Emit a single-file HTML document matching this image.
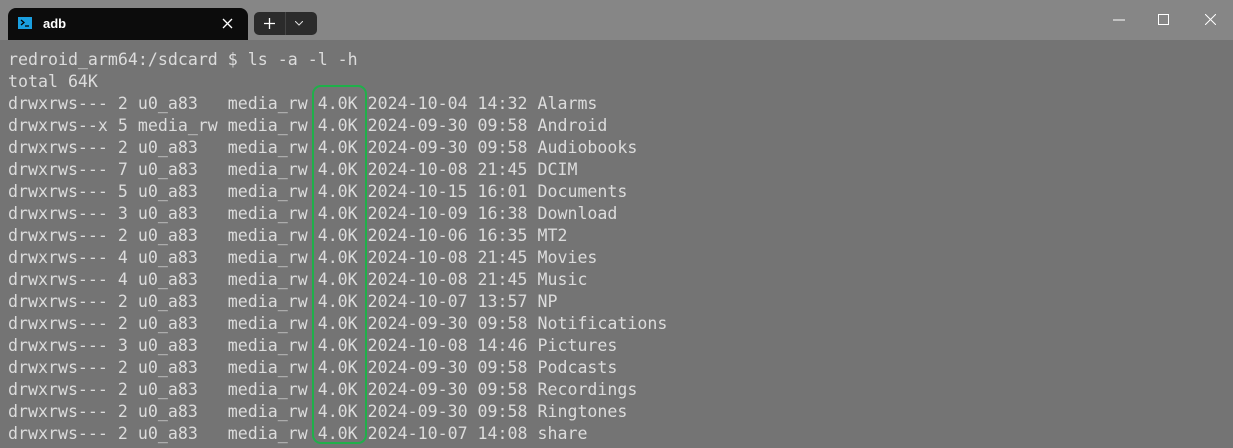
<!DOCTYPE html>
<html><head><style>
body{margin:0;width:1233px;height:448px;overflow:hidden;background:#747474;position:relative;font-family:"DejaVu Sans Mono","Liberation Mono",monospace}
.tb{position:absolute;left:0;top:0;width:1233px;height:40px;background:#868686}
.tab{position:absolute;left:8px;top:8px;width:240px;height:32px;background:#0c0c0c;border-radius:8px 8px 0 0}
.tab .t{position:absolute;left:35px;top:8px;color:#fff;font:600 13px "Liberation Sans",sans-serif}
.btns{position:absolute;left:254px;top:12px;width:63px;height:23px;background:#2b2b2b;border-radius:5px}
pre{position:absolute;left:8px;top:49px;margin:0;font-size:16.6px;line-height:22px;color:#dcdcdc}
.box{position:absolute;left:312px;top:85px;width:51px;height:355px;border:2.5px solid #1fb04a;border-radius:9px}
</style></head><body>
<div class="tb"></div>
<div class="tab">
<svg style="position:absolute;left:10px;top:9px" width="14" height="12"><rect width="14" height="12" fill="#1a9fe0"/><path d="M3 3l3 2.5-3 2.5M7 9h4" stroke="#000" stroke-width="1.3" fill="none"/></svg>
<span class="t">adb</span>
<svg style="position:absolute;left:214px;top:10px" width="11" height="11"><path d="M1 1l9 9M10 1l-9 9" stroke="#fff" stroke-width="1.3"/></svg>
</div>
<div class="btns">
<svg style="position:absolute;left:10px;top:6px" width="11" height="11"><path d="M5.5 0v11M0 5.5h11" stroke="#fff" stroke-width="1.3"/></svg>
<div style="position:absolute;left:31px;top:0;width:1px;height:23px;background:#444"></div>
<svg style="position:absolute;left:41px;top:9px" width="8" height="5"><path d="M0 0l4 4 4-4" stroke="#ddd" stroke-width="1" fill="none"/></svg>
</div>
<svg style="position:absolute;left:1113px;top:19px" width="12" height="2"><path d="M0 1h12" stroke="#fff"/></svg>
<svg style="position:absolute;left:1158px;top:14px" width="11" height="11"><rect x=".5" y=".5" width="10" height="10" stroke="#fff" fill="none"/></svg>
<svg style="position:absolute;left:1205px;top:14px" width="11" height="11"><path d="M0 0l11 11M11 0l-11 11" stroke="#fff"/></svg>
<pre>redroid_arm64:/sdcard $ ls -a -l -h
total 64K
drwxrws--- 2 u0_a83   media_rw 4.0K 2024-10-04 14:32 Alarms
drwxrws--x 5 media_rw media_rw 4.0K 2024-09-30 09:58 Android
drwxrws--- 2 u0_a83   media_rw 4.0K 2024-09-30 09:58 Audiobooks
drwxrws--- 7 u0_a83   media_rw 4.0K 2024-10-08 21:45 DCIM
drwxrws--- 5 u0_a83   media_rw 4.0K 2024-10-15 16:01 Documents
drwxrws--- 3 u0_a83   media_rw 4.0K 2024-10-09 16:38 Download
drwxrws--- 2 u0_a83   media_rw 4.0K 2024-10-06 16:35 MT2
drwxrws--- 4 u0_a83   media_rw 4.0K 2024-10-08 21:45 Movies
drwxrws--- 4 u0_a83   media_rw 4.0K 2024-10-08 21:45 Music
drwxrws--- 2 u0_a83   media_rw 4.0K 2024-10-07 13:57 NP
drwxrws--- 2 u0_a83   media_rw 4.0K 2024-09-30 09:58 Notifications
drwxrws--- 3 u0_a83   media_rw 4.0K 2024-10-08 14:46 Pictures
drwxrws--- 2 u0_a83   media_rw 4.0K 2024-09-30 09:58 Podcasts
drwxrws--- 2 u0_a83   media_rw 4.0K 2024-09-30 09:58 Recordings
drwxrws--- 2 u0_a83   media_rw 4.0K 2024-09-30 09:58 Ringtones
drwxrws--- 2 u0_a83   media_rw 4.0K 2024-10-07 14:08 share</pre>
<div class="box"></div>
</body></html>
